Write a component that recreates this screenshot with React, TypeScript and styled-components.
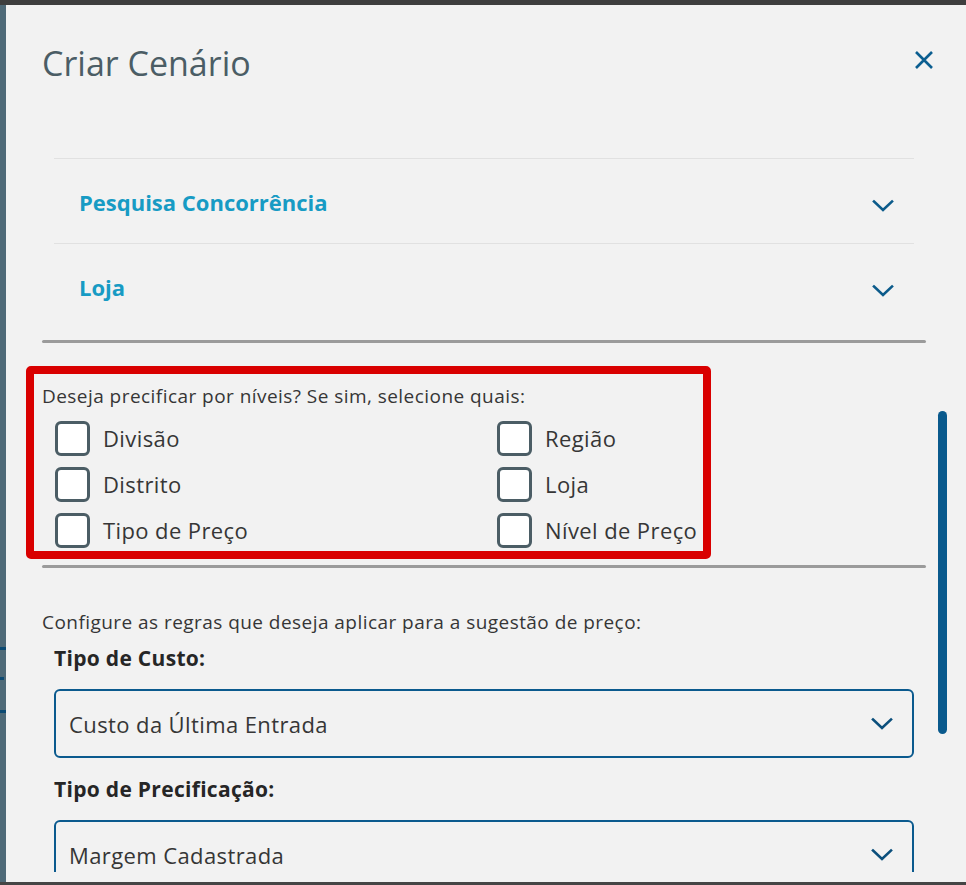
import React from "react";
import styled, { createGlobalStyle } from "styled-components";

const Global = createGlobalStyle`
  html, body { margin: 0; padding: 0; background: #f2f2f2; }
  body { font-family: "Open Sans", "Noto Sans", sans-serif; }
  * { box-sizing: border-box; }
`;

const Page = styled.div`
  width: 966px;
  height: 885px;
  display: flex;
  flex-direction: column;
  background: #f2f2f2;
  border-top: 5px solid #3e3e3e;
  border-bottom: 3px solid #454545;
  overflow: hidden;
`;

const Row = styled.div`
  flex: 1;
  display: flex;
  min-height: 0;
`;

const BackStrip = styled.div`
  width: 6px;
  background: #4f6a78;
  display: flex;
  flex-direction: column;
`;

const StripMark = styled.div<{ $top: number; $w?: number }>`
  margin-top: ${(p) => p.$top}px;
  height: 3px;
  width: ${(p) => p.$w ?? 6}px;
  background: #0c4a73;
`;

const Modal = styled.div`
  flex: 1;
  display: flex;
  flex-direction: column;
  min-height: 0;
  padding-bottom: 10px;
`;

const Header = styled.div`
  height: 115px;
  display: flex;
  align-items: flex-start;
  justify-content: space-between;
  padding: 36px 32px 0 36px;
`;

const Title = styled.h1`
  margin: 0;
  font-weight: 400;
  font-size: 34px;
  line-height: 44px;
  color: #4b5d65;
`;

const CloseBtn = styled.button`
  border: 0;
  background: transparent;
  padding: 0;
  margin-top: 9px;
  width: 20px;
  height: 20px;
  display: flex;
  cursor: pointer;
`;

const Body = styled.div`
  flex: 1;
  min-height: 0;
  display: grid;
  grid-template-columns: 884px 9px;
  column-gap: 12px;
  padding-left: 36px;
  overflow: hidden;
`;

const Content = styled.div`
  display: flex;
  flex-direction: column;
  padding-top: 38px;
`;

const Track = styled.div`
  display: flex;
  flex-direction: column;
`;

const Thumb = styled.div`
  margin-top: 291px;
  height: 323px;
  width: 9px;
  border-radius: 5px;
  background: #0a5a8d;
`;

const Accordion = styled.div`
  margin: 0 12px;
`;

const AccItem = styled.div`
  height: 85px;
  border-top: 1px solid #e1e1e1;
  display: flex;
  align-items: center;
  justify-content: space-between;
  padding: 2px 20px 0 25px;
`;

const AccTitle = styled.span`
  font-weight: 700;
  font-size: 22px;
  color: #179bc4;
`;

const AccToggle = styled.span`
  display: flex;
  padding-top: 7px;
`;

const Separator = styled.div<{ $mt: number }>`
  margin-top: ${(p) => p.$mt}px;
  height: 3px;
  border-radius: 2px;
  background: #9b9b9b;
`;

const LevelSection = styled.div`
  position: relative;
  padding-top: 19px;
  padding-bottom: 18px;
`;

const Highlight = styled.div`
  position: absolute;
  left: -16px;
  top: 23px;
  width: 685px;
  height: 193px;
  border: 8px solid #d90000;
  border-radius: 5px;
  pointer-events: none;
`;

const Prompt = styled.p<{ $mt?: number }>`
  margin: ${(p) => p.$mt ?? 0}px 0 0;
  font-size: 19px;
  letter-spacing: 0.45px;
  line-height: 26px;
  color: #363636;
`;

const CheckGrid = styled.div`
  display: grid;
  grid-template-columns: 442px 1fr;
  row-gap: 12px;
  padding-left: 13px;
  margin-top: 12px;
`;

const CheckItem = styled.label`
  display: flex;
  align-items: center;
  gap: 13px;
  font-size: 22px;
  letter-spacing: 0.4px;
  color: #363636;
  height: 34px;
`;

const Box = styled.span`
  width: 35px;
  height: 35px;
  border: 3px solid #4b5d65;
  border-radius: 6px;
  background: #ffffff;
  flex: none;
`;

const Field = styled.div<{ $mt: number }>`
  margin: ${(p) => p.$mt}px 12px 0;
`;

const FieldLabel = styled.div`
  font-weight: 700;
  font-size: 21px;
  letter-spacing: 0.3px;
  line-height: 28px;
  color: #262626;
`;

const Select = styled.div`
  margin-top: 17px;
  height: 69px;
  border: 2px solid #0b5a8e;
  border-radius: 6px;
  display: flex;
  align-items: center;
  justify-content: space-between;
  padding: 0 19px 0 13px;
  font-size: 22px;
  letter-spacing: 0.4px;
  color: #363636;
  flex: none;
`;

const Chevron = ({ color = "#0c5b8b" }: { color?: string }) => (
  <svg width="22" height="14" viewBox="0 0 22 14" fill="none">
    <path d="M2 2.5 L11 11 L20 2.5" stroke={color} strokeWidth="2.6" strokeLinecap="square" />
  </svg>
);

const CloseIcon = () => (
  <svg width="20" height="20" viewBox="0 0 20 20" fill="none">
    <path d="M2 2 L18 18 M18 2 L2 18" stroke="#0b5e90" strokeWidth="2.6" />
  </svg>
);

const levels: [string, string][] = [
  ["Divisão", "Região"],
  ["Distrito", "Loja"],
  ["Tipo de Preço", "Nível de Preço"],
];

export default function App() {
  return (
    <>
      <Global />
      <Page>
        <Row>
          <BackStrip>
            <StripMark $top={642} />
            <StripMark $top={27} $w={4} />
            <StripMark $top={30} />
          </BackStrip>
          <Modal>
            <Header>
              <Title>Criar Cenário</Title>
              <CloseBtn aria-label="Fechar">
                <CloseIcon />
              </CloseBtn>
            </Header>
            <Body>
              <Content>
                <Accordion>
                  <AccItem>
                    <AccTitle>Pesquisa Concorrência</AccTitle>
                    <AccToggle>
                      <Chevron />
                    </AccToggle>
                  </AccItem>
                  <AccItem>
                    <AccTitle>Loja</AccTitle>
                    <AccToggle>
                      <Chevron />
                    </AccToggle>
                  </AccItem>
                </Accordion>
                <Separator $mt={12} />
                <LevelSection>
                  <Prompt $mt={21}>Deseja precificar por níveis? Se sim, selecione quais:</Prompt>
                  <CheckGrid>
                    {levels.flatMap(([a, b]) => [
                      <CheckItem key={a}>
                        <Box />
                        {a}
                      </CheckItem>,
                      <CheckItem key={b}>
                        <Box />
                        {b}
                      </CheckItem>,
                    ])}
                  </CheckGrid>
                  <Highlight />
                </LevelSection>
                <Separator $mt={0} />
                <Prompt $mt={41}>Configure as regras que deseja aplicar para a sugestão de preço:</Prompt>
                <Field $mt={9}>
                  <FieldLabel>Tipo de Custo:</FieldLabel>
                  <Select>
                    Custo da Última Entrada
                    <Chevron color="#0b4f7c" />
                  </Select>
                </Field>
                <Field $mt={17}>
                  <FieldLabel>Tipo de Precificação:</FieldLabel>
                  <Select>
                    Margem Cadastrada
                    <Chevron color="#0b4f7c" />
                  </Select>
                </Field>
              </Content>
              <Track>
                <Thumb />
              </Track>
            </Body>
          </Modal>
        </Row>
      </Page>
    </>
  );
}
